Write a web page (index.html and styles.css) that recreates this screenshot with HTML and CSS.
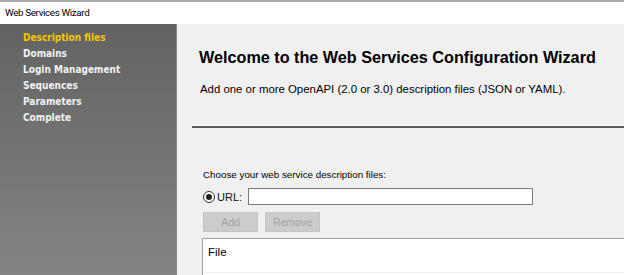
FILE: index.html
```html
<!DOCTYPE html>
<html>
<head>
<meta charset="utf-8">
<link rel="stylesheet" href="styles.css">
</head>
<body>
<div class="window">
  <div class="titlebar">Web Services Wizard</div>
  <div class="main">
    <nav class="sidebar">
      <div class="step active">Description files</div>
      <div class="step">Domains</div>
      <div class="step">Login Management</div>
      <div class="step">Sequences</div>
      <div class="step">Parameters</div>
      <div class="step">Complete</div>
    </nav>
    <section class="content">
      <header class="intro">
        <h1 class="heading">Welcome to the Web Services Configuration Wizard</h1>
        <p class="lead">Add one or more OpenAPI (2.0 or 3.0) description files (JSON or YAML).</p>
      </header>
      <div class="sep"></div>
      <div class="form">
        <div class="caption">Choose your web service description files:</div>
        <div class="url-row">
          <span class="radio"><span class="dot"></span></span>
          <span class="url-label">URL:</span>
          <span class="textbox"></span>
        </div>
        <div class="buttons">
          <span class="btn">Add</span>
          <span class="btn">Remove</span>
        </div>
        <div class="filelist">
          <div class="list-header">File</div>
        </div>
      </div>
    </section>
  </div>
</div>
</body>
</html>
```
FILE: styles.css
```css
html, body {
  margin: 0;
  padding: 0;
  width: 624px;
  height: 275px;
  overflow: hidden;
  background: #f0f0f0;
}
.window {
  width: 624px;
  height: 275px;
  display: flex;
  flex-direction: column;
  border-top: 2px solid #a9a9a9;
  box-sizing: border-box;
  overflow: hidden;
}
.titlebar {
  height: 22px;
  background: #ffffff;
  font-family: Roboto, "Noto Sans", sans-serif;
  font-size: 9.8px;
  letter-spacing: -0.35px;
  line-height: 22px;
  padding-left: 5px;
  color: #000;
  flex: none;
}
.main {
  flex: 1;
  display: flex;
  min-height: 0;
}
.sidebar {
  width: 177px;
  flex: none;
  background: linear-gradient(#626262, #848484);
  border-right: 1px solid #8a8a8a;
  padding-top: 6px;
  box-sizing: border-box;
}
.step {
  font-family: "DejaVu Sans Condensed", "DejaVu Sans", sans-serif;
  font-stretch: condensed;
  font-weight: bold;
  font-size: 10px;
  line-height: 16px;
  padding-left: 23px;
  color: #f2f2f2;
}
.step.active {
  color: #f4c700;
}
.content {
  flex: 1;
  min-width: 0;
  display: flex;
  flex-direction: column;
  background: #f0f0f0;
}
.intro {
  flex: none;
  padding: 23px 0 0 22px;
  height: 101px;
  box-sizing: border-box;
}
.heading {
  margin: 0;
  font-family: "Liberation Sans", Arial, sans-serif;
  font-weight: bold;
  font-size: 16.2px;
  line-height: 20px;
  color: #000;
  white-space: nowrap;
}
.lead {
  margin: 14px 0 0 1px;
  font-family: "Liberation Sans", Arial, sans-serif;
  font-size: 11.4px;
  line-height: 16px;
  color: #000;
  white-space: nowrap;
}
.sep {
  flex: none;
  margin-left: 15px;
  height: 2px;
  background: #5c5c5c;
  border-top: 1px solid #ffffff;
}
.form {
  flex: 1;
  min-height: 0;
  padding: 40px 0 0 26px;
  display: flex;
  flex-direction: column;
  font-family: "Liberation Sans", Arial, sans-serif;
  font-size: 9.8px;
  color: #000;
}
.caption {
  line-height: 13px;
}
.url-row {
  margin-top: 7px;
  display: flex;
  align-items: center;
  height: 17px;
}
.radio {
  width: 10px;
  height: 10px;
  border: 1px solid #333;
  border-radius: 50%;
  display: flex;
  align-items: center;
  justify-content: center;
  background: #fff;
}
.dot {
  width: 6px;
  height: 6px;
  border-radius: 50%;
  background: #222;
}
.url-label {
  margin-left: 2px;
  font-size: 11px;
  color: #111;
}
.textbox {
  margin-left: 6px;
  width: 283px;
  height: 15px;
  background: #fff;
  border: 1px solid #7a7a7a;
}
.buttons {
  margin-top: 7px;
  display: flex;
  gap: 7px;
}
.btn {
  width: 55px;
  height: 20px;
  background: #cccccc;
  border: 1px solid #c4c4c4;
  box-sizing: border-box;
  color: #a2a2a2;
  font-size: 10.5px;
  line-height: 18px;
  text-align: center;
}
.filelist {
  flex: 1;
  min-height: 0;
  margin-top: 6px;
  margin-left: -1px;
  background: #fff;
  border-top: 1px solid #a0a0a0;
  border-left: 1px solid #a0a0a0;
}
.list-header {
  height: 33px;
  border-bottom: 1px solid #f0f0f0;
  padding-left: 5px;
  font-size: 11.5px;
  line-height: 27px;
  color: #000;
}
```
